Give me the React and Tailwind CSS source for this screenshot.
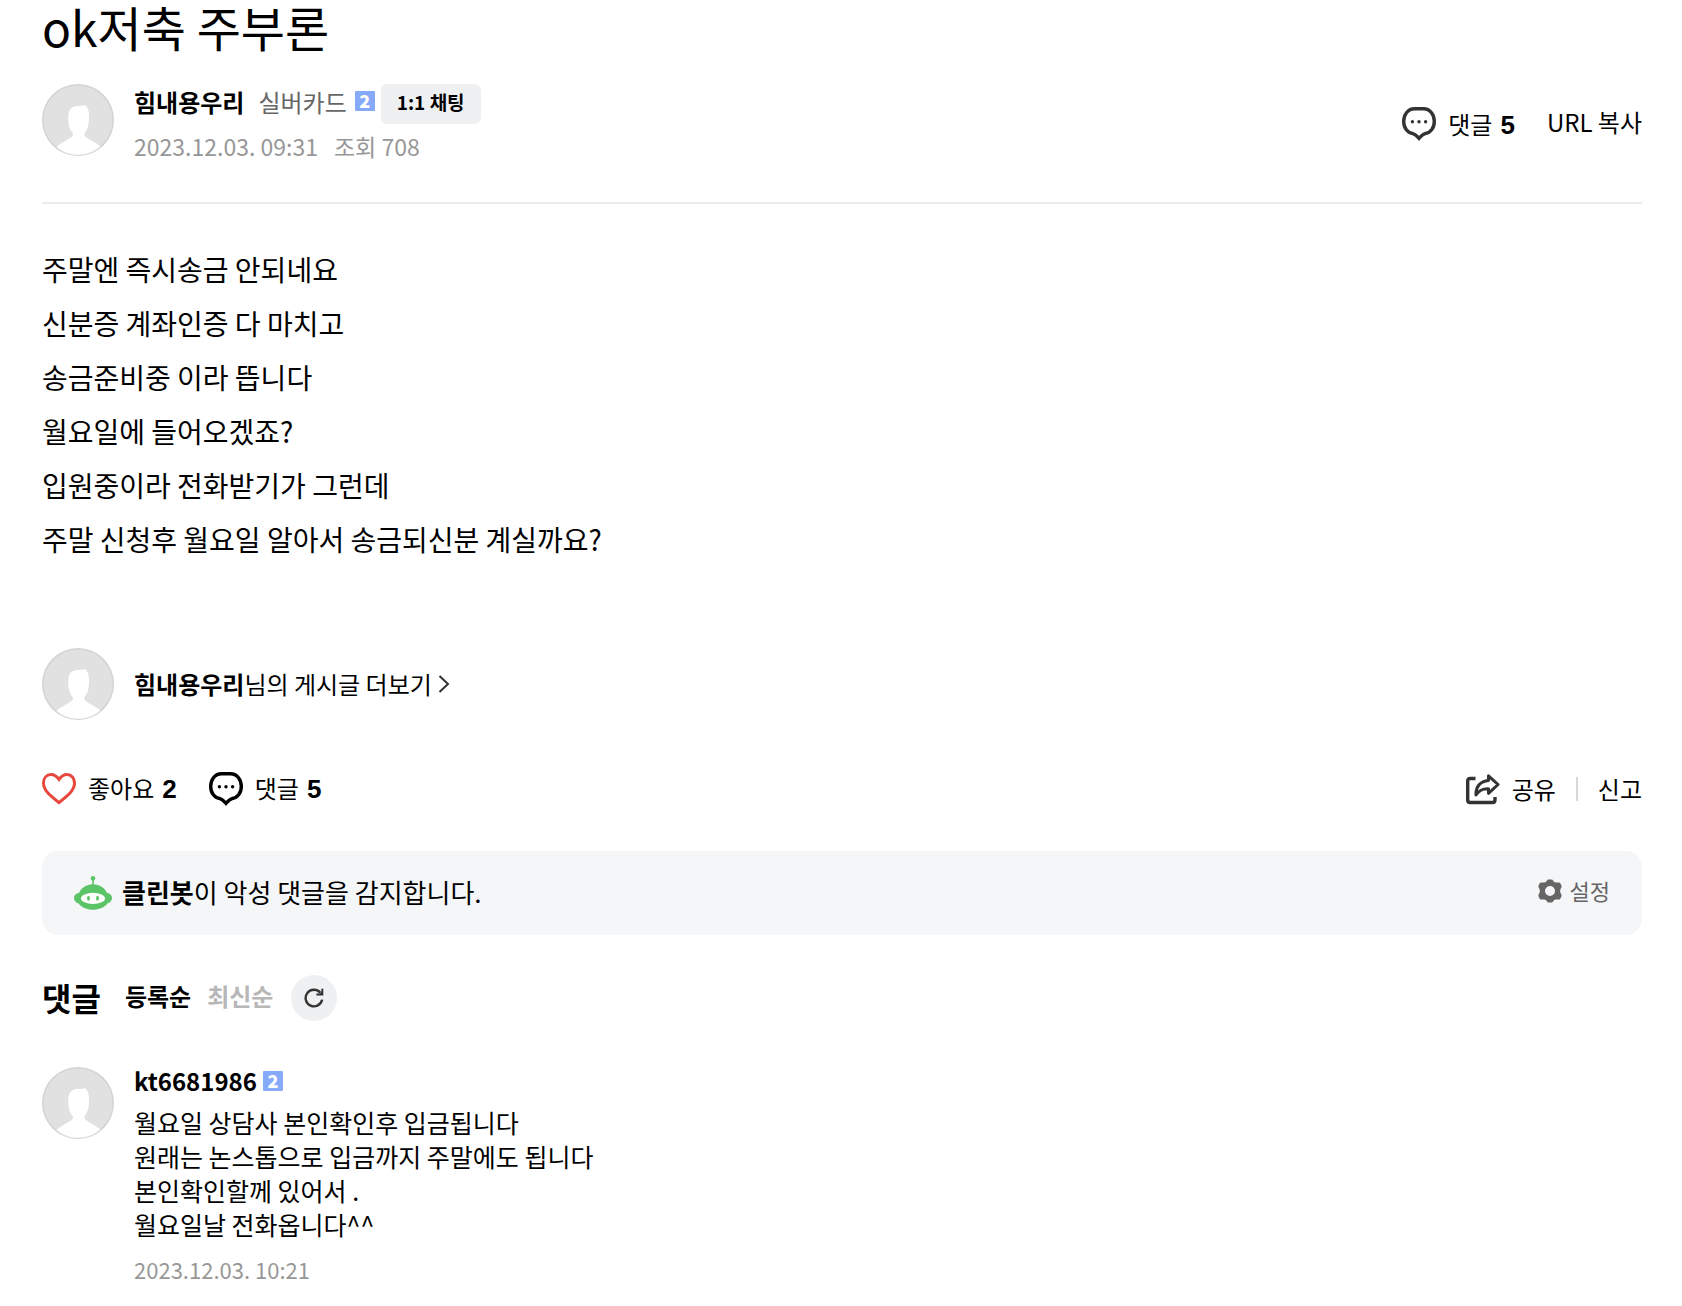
import React, { useState } from "react";

const fontClass = "font-['Noto_Sans_CJK_KR',sans-serif]";
const countClass = "font-['Liberation_Sans',sans-serif] text-[26px] font-bold";

const postLines = [
  "주말엔 즉시송금 안되네요",
  "신분증 계좌인증 다 마치고",
  "송금준비중 이라 뜹니다",
  "월요일에 들어오겠죠?",
  "입원중이라 전화받기가 그런데",
  "주말 신청후 월요일 알아서 송금되신분 계실까요?",
];

const comments = [
  {
    id: 1,
    author: "kt6681986",
    level: 2,
    date: "2023.12.03. 10:21",
    lines: [
      "월요일 상담사 본인확인후 입금됩니다",
      "원래는 논스톱으로 입금까지 주말에도 됩니다",
      "본인확인할께 있어서 .",
      "월요일날 전화옵니다^^",
    ],
  },
];

const Avatar = () => (
  <svg viewBox="0 0 72 72" className="size-[72px] shrink-0" aria-hidden="true">
    <circle cx="36" cy="36" r="36" fill="#e1e1e1" />
    <path
      d="M14.5 63 C19 59 26 55.5 29.5 53 C31 52 31.3 50.5 30.6 49 C27.5 45 26.2 41 26.2 34 C26.2 26 29 22.5 35 22 C38 21.7 41 22.2 43.5 21 C43.6 22 43.9 22.4 44.6 22.8 C46.5 25 47 28 47 33 C47 41 45.5 45.5 42.8 48.8 C42 50.3 42.2 51.8 43.5 52.7 C48 56 54 59 58.5 62.5 C52 68.5 44.5 71 36 71 C27.5 71 20.5 68.5 14.5 63 Z"
      fill="#fff"
    />
    <circle cx="36" cy="36" r="35.2" fill="none" stroke="#000" strokeOpacity="0.06" strokeWidth="1.6" />
  </svg>
);

const LevelBadge = ({ level }) => (
  <span className="flex size-5 shrink-0 items-center justify-center rounded-[1px] bg-[#86a9f9] pb-0.5 text-lg font-black leading-none text-white">
    {level}
  </span>
);

const CommentIcon = ({ color }) => (
  <svg viewBox="0 0 34 34" className="size-[34px] shrink-0" fill="none" aria-hidden="true">
    <path
      d="M12.5 1.7 H21.5 C28 1.7 32.3 7.5 32.3 14.5 C32.3 21 28.5 26 22.6 26.8 C20.5 27.4 19 29.2 17 31.4 C15 29.2 13.5 27.4 11.4 26.8 C5.5 26 1.7 21 1.7 14.5 C1.7 7.5 6 1.7 12.5 1.7 Z"
      stroke={color}
      strokeWidth="3.4"
    />
    <circle cx="10.4" cy="14.7" r="1.7" fill={color} />
    <circle cx="17" cy="14.7" r="1.7" fill={color} />
    <circle cx="23.6" cy="14.7" r="1.7" fill={color} />
  </svg>
);

const HeartIcon = () => (
  <svg viewBox="0 0 34 32" className="h-8 w-[34px] shrink-0" fill="none" aria-hidden="true">
    <path
      d="M17 6.5 C14.5 3 11.8 1.6 9 1.6 C4.6 1.6 1.5 5 1.5 10 C1.5 17.5 8 22.5 17 29.6 C26 22.5 32.5 17.5 32.5 10 C32.5 5 29.4 1.6 25 1.6 C22.2 1.6 19.5 3 17 6.5 Z"
      stroke="#e8473d"
      strokeWidth="3"
    />
  </svg>
);

const ShareIcon = () => (
  <svg viewBox="0 0 34 32" className="h-8 w-[34px] shrink-0" fill="none" stroke="#333" strokeWidth="3.4" aria-hidden="true">
    <path d="M9.5 5.5 H4 Q1.7 5.5 1.7 8 V27 Q1.7 29.5 4 29.5 H26.5 Q29 29.5 29 27 V24" />
    <path
      d="M22.5 2.8 L32 11.5 L22.5 20.3 V15.8 C16 15.5 13 17.5 10 22 C9.5 13.5 14.5 8 22.5 7.4 Z"
      strokeWidth="3"
      strokeLinejoin="round"
    />
  </svg>
);

const CleanBotIcon = () => (
  <svg viewBox="0 0 38 34" className="h-[34px] w-[38px] shrink-0" aria-hidden="true">
    <g fill="#5bc467">
      <circle cx="19" cy="2.3" r="2.3" />
      <rect x="18.2" y="3" width="1.6" height="7" />
      <path d="M19 8.2 C25.5 8.2 31 12 32.6 16.4 C36 17.5 38 19 38 21.8 C38 25 35.7 27 33.7 27.3 C30.5 31.5 25 33.8 19 33.8 C13 33.8 7.5 31.5 4.3 27.3 C2.3 27 0 25 0 21.8 C0 19 2 17.5 5.4 16.4 C7 12 12.5 8.2 19 8.2 Z" />
    </g>
    <ellipse cx="19" cy="22.4" rx="12" ry="5.6" fill="#fff" />
    <rect x="13.2" y="20" width="2.6" height="4.6" rx="1.3" fill="#5bc467" />
    <rect x="22.2" y="20" width="2.6" height="4.6" rx="1.3" fill="#5bc467" />
  </svg>
);

const GearIcon = () => (
  <svg viewBox="0 0 24 24" className="size-6 shrink-0" aria-hidden="true">
    <path
      fillRule="evenodd"
      fill="#666"
      d="M10.3 0.4 H13.7 Q14.6 0.4 15 1.5 Q15.9 3.8 18.3 3.6 L20.7 3.4 Q21.8 3.3 22.3 4.3 L23.5 6.7 Q24 7.7 23.3 8.6 Q20.9 12 23.3 15.4 Q24 16.3 23.5 17.3 L22.3 19.7 Q21.8 20.7 20.7 20.6 L18.3 20.4 Q15.9 20.2 15 22.5 Q14.6 23.6 13.7 23.6 H10.3 Q9.4 23.6 9 22.5 Q8.1 20.2 5.7 20.4 L3.3 20.6 Q2.2 20.7 1.7 19.7 L0.5 17.3 Q0 16.3 0.7 15.4 Q3.1 12 0.7 8.6 Q0 7.7 0.5 6.7 L1.7 4.3 Q2.2 3.3 3.3 3.4 L5.7 3.6 Q8.1 3.8 9 1.5 Q9.4 0.4 10.3 0.4 Z M12 7 A5 5 0 1 0 12 17 A5 5 0 1 0 12 7 Z"
    />
  </svg>
);

const RefreshIcon = () => (
  <svg viewBox="0 0 20 20" className="size-5" fill="none" aria-hidden="true">
    <path d="M16.2 4.6 A8.3 8.3 0 1 0 18.1 11.6" stroke="#333" strokeWidth="2.4" />
    <path d="M19.3 0.8 V7.4 H12.4 V5.4 H15.6 L17.3 3.8 V0.8 Z" fill="#333" />
  </svg>
);

const App = () => {
  const [sort, setSort] = useState("asc");

  return (
    <main className={`bg-white pb-6 pl-[42px] pr-10 text-black ${fontClass}`}>
      <h1 className="text-5xl leading-[52px]">ok저축 주부론</h1>

      {/* Writer info */}
      <header className="flex items-start justify-between border-b-2 border-[#ebecef] pb-[34px] pt-8">
        <div className="flex gap-5">
          <Avatar />
          <div>
            <div className="flex items-start">
              <a href="#writer" className="text-2xl font-bold leading-9">힘내용우리</a>
              <span className="ml-3.5 text-2xl leading-9 text-[#676767]">실버카드</span>
              <span className="ml-2 pt-[7px]">
                <LevelBadge level={2} />
              </span>
              <button type="button" className="ml-1.5 h-10 rounded-md bg-[#eff0f2] px-4 pb-1 text-[19px] font-bold leading-9">
                1:1 채팅
              </button>
            </div>
            <p className="flex gap-4 text-[23px] leading-[44px] text-[#979797]">
              <span>2023.12.03. 09:31</span>
              <span>조회 708</span>
            </p>
          </div>
        </div>
        <div className="flex items-center gap-8 pt-5 text-2xl leading-9">
          <a href="#comments" className="flex items-center gap-3">
            <CommentIcon color="#333" />
            <span className="flex items-baseline gap-2">
              댓글 <strong className={countClass}>5</strong>
            </span>
          </a>
          <button type="button" className="pb-1">URL 복사</button>
        </div>
      </header>

      {/* Post body */}
      <article className="pt-[38px] text-[28px] leading-[54px]">
        {postLines.map((line) => (
          <p key={line}>{line}</p>
        ))}
      </article>

      <a href="#more" className="mt-[82px] flex items-center gap-5 text-2xl">
        <Avatar />
        <span className="flex items-center">
          <strong>힘내용우리</strong>님의 게시글 더보기
          <svg viewBox="0 0 12 20" className="ml-1.5 h-5 w-3" fill="none" stroke="#333" strokeWidth="2" aria-hidden="true">
            <path d="M1.5 2 L10 10 L1.5 18" />
          </svg>
        </span>
      </a>

      {/* Reactions */}
      <div className="mt-[50px] flex items-center justify-between text-2xl leading-9">
        <div className="flex items-center gap-8">
          <button type="button" className="flex items-center gap-3">
            <HeartIcon />
            <span className="flex items-baseline gap-2">
              좋아요 <strong className={countClass}>2</strong>
            </span>
          </button>
          <a href="#comments" className="flex items-center gap-3">
            <CommentIcon color="#000" />
            <span className="flex items-baseline gap-2">
              댓글 <strong className={countClass}>5</strong>
            </span>
          </a>
        </div>
        <div className="flex items-center">
          <button type="button" className="flex items-center gap-3">
            <ShareIcon />
            공유
          </button>
          <span className="mx-5 h-6 w-0.5 bg-[#d8d8d8]" />
          <button type="button">신고</button>
        </div>
      </div>

      {/* Clean bot notice */}
      <section className="mt-11 flex h-[84px] items-center justify-between rounded-2xl bg-[#f5f6f8] px-8">
        <p className="flex items-center gap-2.5 text-[26px]">
          <CleanBotIcon />
          <span className="pb-1">
            <strong>클린봇</strong>이 악성 댓글을 감지합니다.
          </span>
        </p>
        <button type="button" className="flex items-center gap-2 pb-1 text-[22px] text-[#676767]">
          <GearIcon />
          <span className="pb-0.5">설정</span>
        </button>
      </section>

      {/* Comments */}
      <section id="comments" className="mt-10">
        <div className="flex items-center">
          <h2 className="pb-0.5 text-[32px] font-bold leading-[44px]">댓글</h2>
          <button
            type="button"
            onClick={() => setSort("asc")}
            className={`ml-6 pb-1 text-2xl font-bold leading-9 ${sort === "asc" ? "text-black" : "text-[#b7b7b7]"}`}
          >
            등록순
          </button>
          <button
            type="button"
            onClick={() => setSort("desc")}
            className={`ml-4 pb-1 text-2xl font-bold leading-9 ${sort === "desc" ? "text-black" : "text-[#b7b7b7]"}`}
          >
            최신순
          </button>
          <button
            type="button"
            aria-label="새로고침"
            className="ml-[18px] flex size-[46px] items-center justify-center rounded-full bg-[#eff0f2]"
          >
            <RefreshIcon />
          </button>
        </div>

        <ul className="mt-[46px]">
          {comments.map((comment) => (
            <li key={comment.id} className="flex gap-5">
              <Avatar />
              <div>
                <div className="flex items-center gap-1.5 text-2xl font-bold leading-7">
                  {comment.author}
                  <LevelBadge level={comment.level} />
                </div>
                <div className="mt-2.5 text-[25px] leading-[34px]">
                  {comment.lines.map((line) => (
                    <p key={line}>{line}</p>
                  ))}
                </div>
                <p className="mt-3 text-[22px] leading-8 text-[#979797]">{comment.date}</p>
              </div>
            </li>
          ))}
        </ul>
      </section>
    </main>
  );
};

export default App;
